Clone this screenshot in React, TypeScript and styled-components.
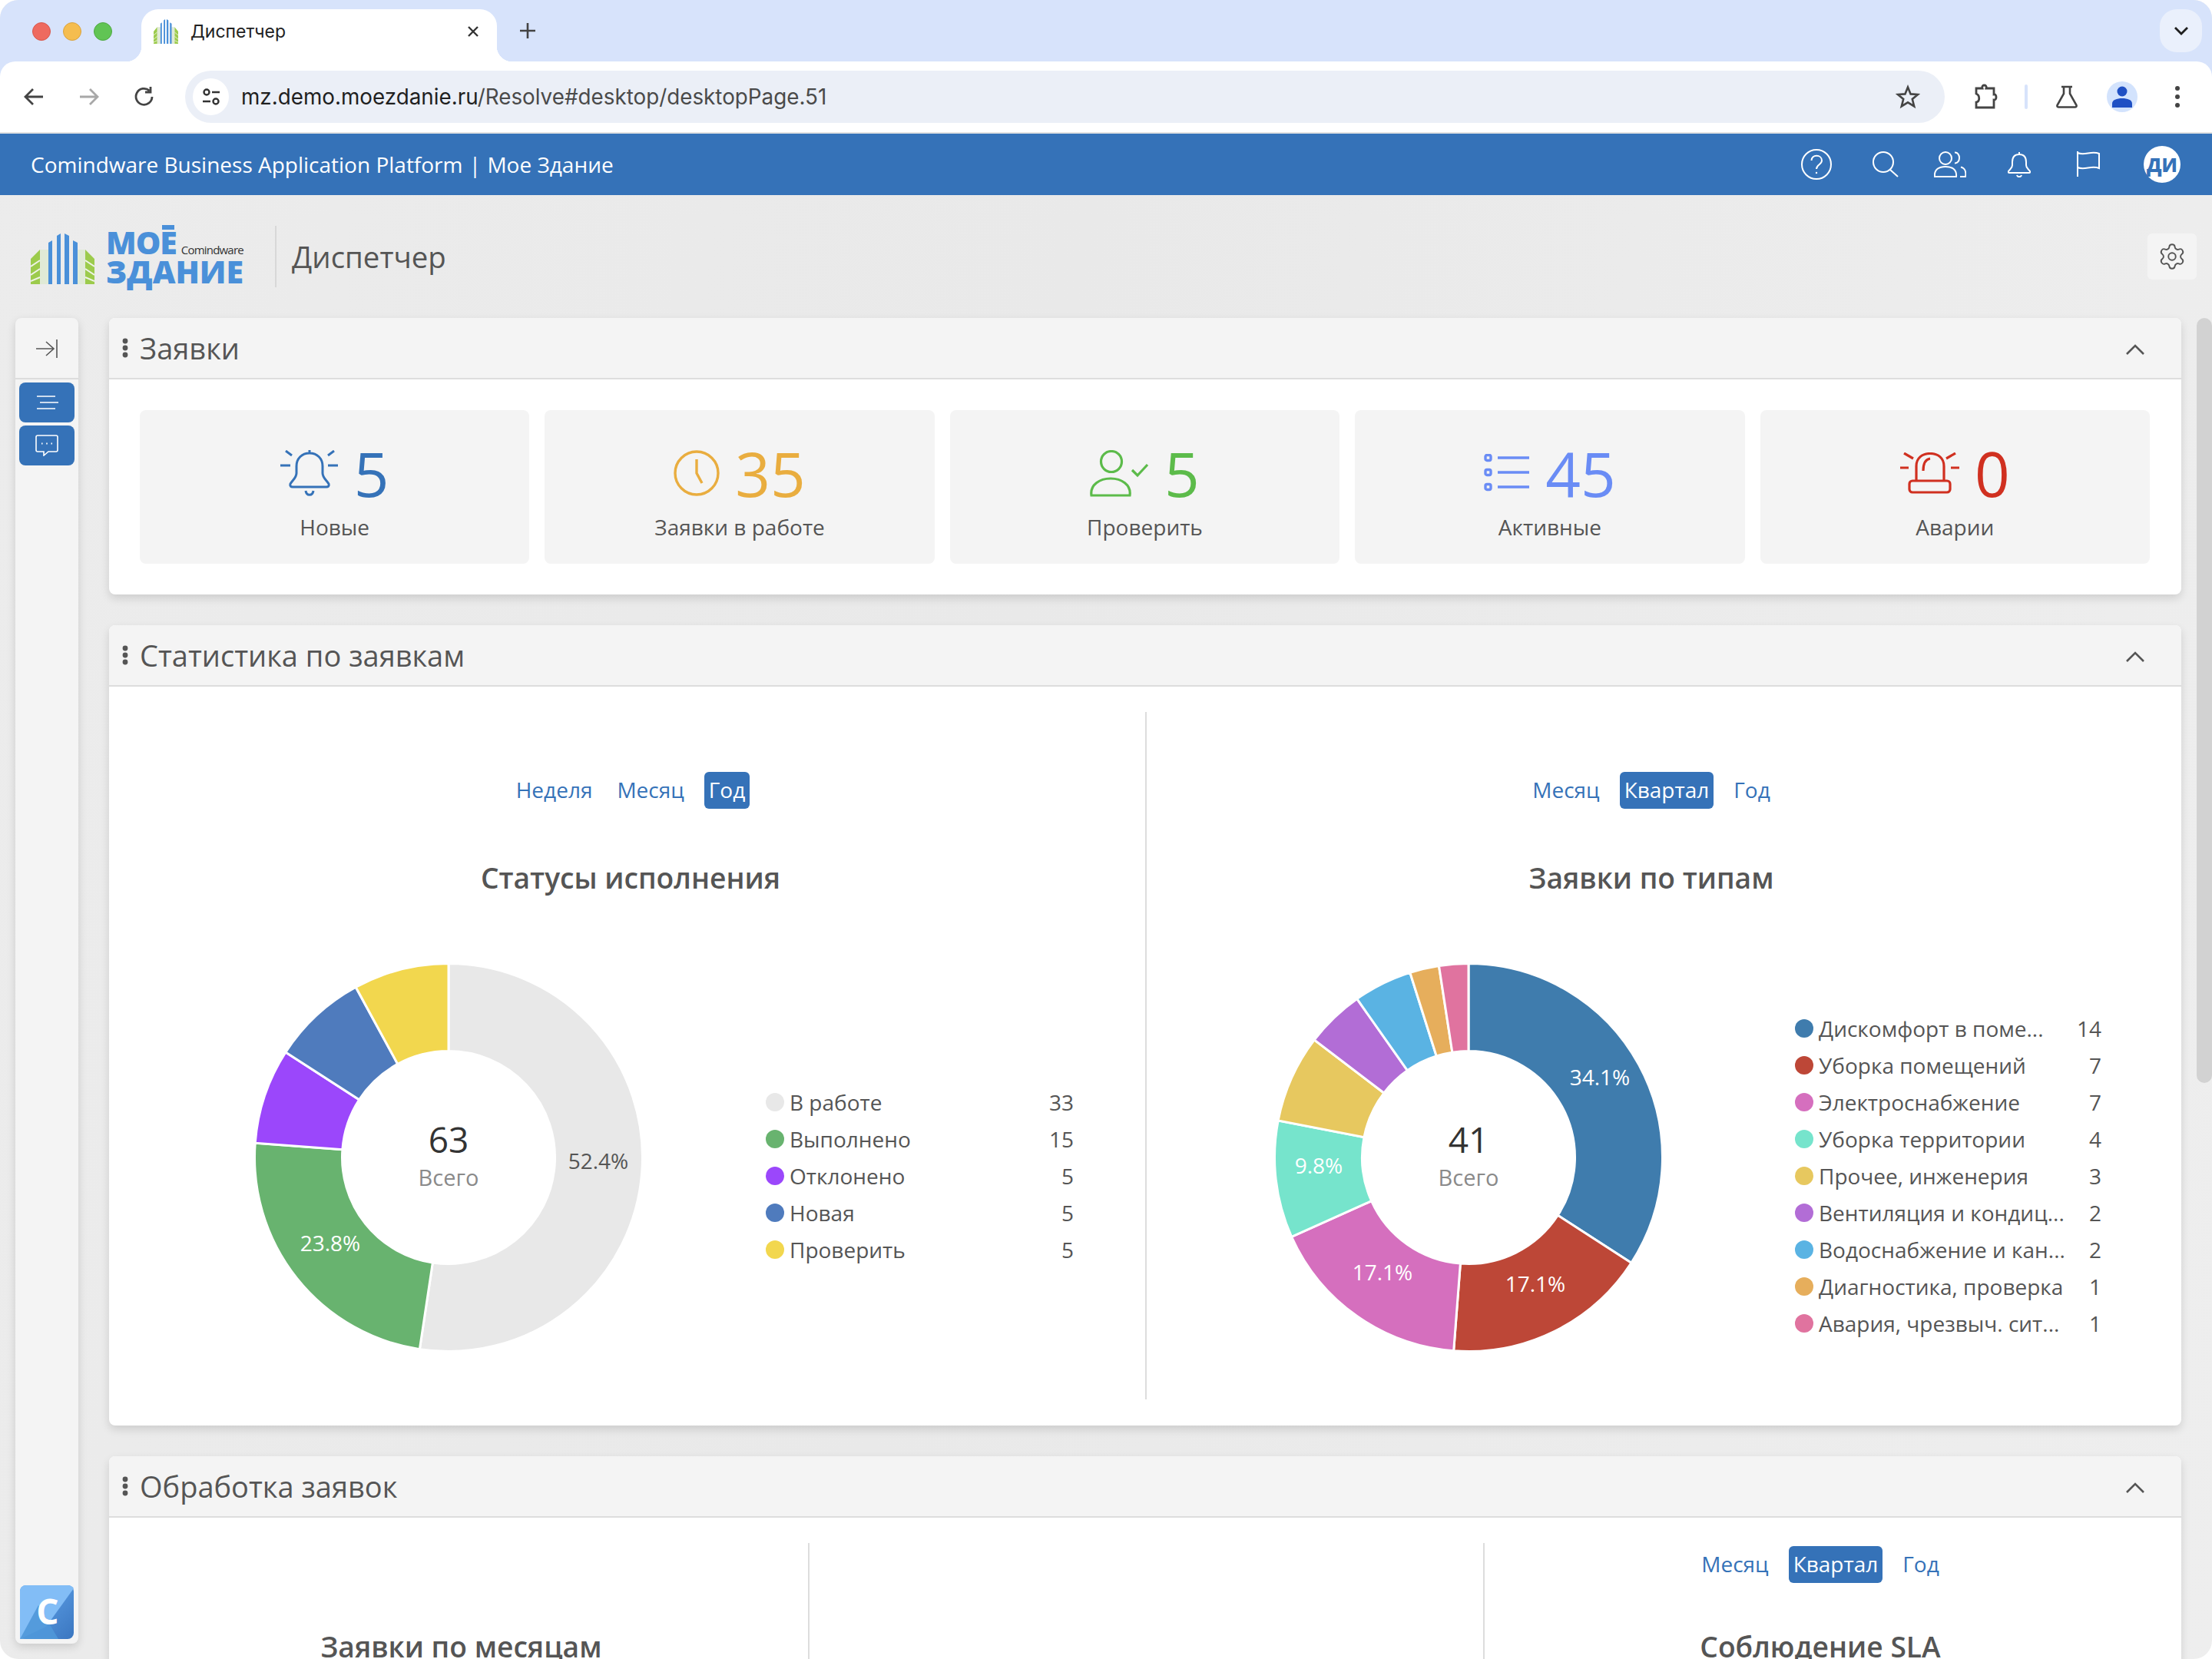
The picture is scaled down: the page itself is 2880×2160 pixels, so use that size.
import React from 'react';
import styled, { createGlobalStyle } from 'styled-components';
import { Settings } from 'lucide-react';

const GlobalStyle = createGlobalStyle`
  html, body {
    margin: 0;
    background: #fff;
  }
  * {
    box-sizing: border-box;
  }
`;

const Window = styled.div`
  width: 2880px;
  height: 2160px;
  border-radius: 24px;
  overflow: hidden;
  display: flex;
  flex-direction: column;
  font-family: 'Open Sans', 'Liberation Sans', sans-serif;
  color: #555;
  background: linear-gradient(100deg, #ececec 0%, #e9e9e9 45%, #eeeeee 100%);
`;

/* browser chrome */
const Chrome = styled.div`
  background: #d7e3fb;
  flex: none;
`;

const TabStrip = styled.div`
  height: 80px;
  padding-top: 12px;
  display: flex;
  align-items: flex-start;
`;

const Lights = styled.div`
  display: flex;
  gap: 16px;
  margin: 17px 38px 0 42px;
`;

const Light = styled.span<{ $c: string; $b: string }>`
  width: 24px;
  height: 24px;
  border-radius: 50%;
  background: ${(p) => p.$c};
  border: 1px solid ${(p) => p.$b};
`;

const BrowserTab = styled.div`
  position: relative;
  width: 463px;
  height: 68px;
  background: #fff;
  border-radius: 22px 22px 0 0;
  display: flex;
  align-items: center;
  padding: 0 24px 10px 16px;
  font-family: Inter, 'Liberation Sans', sans-serif;
  font-size: 23px;
  color: #222;

  &::before,
  &::after {
    content: '';
    position: absolute;
    bottom: 0;
    width: 20px;
    height: 20px;
  }
  &::before {
    left: -20px;
    background: radial-gradient(circle at 0 0, #d7e3fb 20px, #fff 20.5px);
  }
  &::after {
    right: -20px;
    background: radial-gradient(circle at 100% 0, #d7e3fb 20px, #fff 20.5px);
  }
`;

const TabTitle = styled.span`
  margin-left: 16px;
  flex: 1;
`;

const NewTab = styled.svg`
  margin: 12px 0 0 24px;
`;

const TabListButton = styled.div`
  margin-left: auto;
  margin-right: 13px;
  width: 55px;
  height: 56px;
  border-radius: 22px;
  background: #eaf0fc;
  display: flex;
  align-items: center;
  justify-content: center;
`;

const Toolbar = styled.div`
  height: 94px;
  background: #fff;
  border-radius: 20px 20px 0 0;
  border-bottom: 2px solid #e2e2e2;
  padding: 0 0 0 28px;
  display: flex;
  align-items: center;
`;

const ToolIcon = styled.svg<{ $ml?: number }>`
  flex: none;
  margin-left: ${(p) => p.$ml ?? 0}px;
`;

const AddressBar = styled.div`
  width: 2291px;
  height: 68px;
  margin-left: 37px;
  border-radius: 34px;
  background: #ebeff7;
  display: flex;
  align-items: center;
  padding: 0 32px 0 10px;
`;

const SiteInfo = styled.div`
  width: 47px;
  height: 48px;
  border-radius: 50%;
  background: #fff;
  display: flex;
  align-items: center;
  justify-content: center;
`;

const Url = styled.div`
  flex: 1;
  margin-left: 16px;
  font-family: Inter, 'Liberation Sans', sans-serif;
  font-size: 27.8px;
  color: #1f1f1f;
  span {
    color: #4a4a4a;
  }
`;

const Separator = styled.span`
  width: 4px;
  height: 32px;
  margin-left: 35px;
  border-radius: 2px;
  background: #d7e3fb;
`;

const Profile = styled.div`
  width: 40px;
  height: 40px;
  margin-left: 36px;
  border-radius: 50%;
  background: #d3e3fd;
  display: flex;
  align-items: center;
  justify-content: center;
`;

/* app header */
const AppHeader = styled.header`
  flex: none;
  height: 80px;
  background: #3572b8;
  color: #fff;
  display: flex;
  align-items: center;
  padding: 0 41px 0 40px;
  font-size: 28px;
`;

const AppName = styled.div`
  margin-right: auto;
`;

const Pipe = styled.span`
  margin: 0 1px;
`;

const HeaderIcon = styled.svg<{ $ml: number }>`
  flex: none;
  margin-left: ${(p) => p.$ml}px;
`;

const Avatar = styled.div`
  width: 48px;
  height: 48px;
  margin-left: 57px;
  border-radius: 50%;
  background: #fff;
  color: #3572b8;
  font-size: 24px;
  font-weight: 800;
  display: flex;
  align-items: center;
  justify-content: center;
`;

/* logo row */
const TitleRow = styled.div`
  flex: none;
  height: 160px;
  display: flex;
  align-items: center;
  padding: 0 20px 0 40px;
`;

const Logo = styled.div`
  width: 278px;
  height: 70px;
  display: flex;
  gap: 15px;
  margin-top: 10px;
`;

const LogoText = styled.div`
  display: flex;
  flex-direction: column;
  color: #4a90d9;
  font-weight: 800;
  font-size: 41px;
  line-height: 38px;
  margin-top: -8px;
`;

const LogoTop = styled.div`
  display: flex;
  align-items: baseline;
  letter-spacing: -1px;
`;

const LogoE = styled.span`
  position: relative;
  &::before {
    content: '';
    position: absolute;
    left: 3px;
    right: 3px;
    top: 6px;
    height: 6px;
    background: #4a90d9;
  }
`;

const LogoBrand = styled.span`
  margin-left: 6px;
  font-size: 15px;
  line-height: 1;
  font-weight: 400;
  letter-spacing: -0.8px;
  color: #333;
`;

const LogoBottom = styled.div`
  letter-spacing: 0;
`;

const TitleDivider = styled.span`
  width: 2px;
  height: 80px;
  margin-left: 40px;
  background: #d8d8d8;
`;

const PageTitle = styled.h1`
  margin: 0 auto 0 20px;
  font-size: 38.4px;
  font-weight: 400;
  color: #555;
`;

const GearButton = styled.div`
  width: 64px;
  height: 60px;
  border-radius: 6px;
  background: #f4f4f4;
  color: #555;
  display: flex;
  align-items: center;
  justify-content: center;
`;

/* workspace */
const Workspace = styled.div`
  flex: 1;
  min-height: 0;
  display: flex;
  padding-left: 20px;
`;

const Sidebar = styled.aside`
  flex: none;
  width: 82px;
  height: 1726px;
  border-radius: 8px;
  background: #f4f4f4;
  box-shadow: 0 4px 12px rgba(0, 0, 0, 0.14);
  display: flex;
  flex-direction: column;
  align-items: center;
`;

const SideToggle = styled.div`
  width: 100%;
  height: 80px;
  border-bottom: 2px solid #ddd;
  display: flex;
  align-items: center;
  justify-content: center;
  padding: 2px 0 0 0;
`;

const SideButton = styled.div`
  width: 72px;
  height: 52px;
  margin-top: 4px;
  border-radius: 8px;
  background: #3572b8;
  display: flex;
  align-items: center;
  justify-content: center;
`;

const CompanyBadge = styled.svg`
  margin-top: auto;
  margin-bottom: 6px;
`;

const Main = styled.main`
  flex: none;
  width: 2698px;
  margin-left: 40px;
  display: flex;
  flex-direction: column;
  gap: 40px;
`;

const ScrollThumb = styled.div`
  flex: none;
  width: 20px;
  height: 996px;
  margin-left: 20px;
  border-radius: 10px;
  background: #d2d2d2;
`;

const Panel = styled.section`
  flex: none;
  border-radius: 8px;
  background: #fff;
  box-shadow: 0 5px 12px rgba(0, 0, 0, 0.13);
`;

const PanelHeader = styled.div`
  height: 80px;
  border-radius: 8px 8px 0 0;
  border-bottom: 2px solid #ddd;
  background: #f4f4f4;
  display: flex;
  align-items: center;
  padding: 0 48px 0 17px;
`;

const PanelTitle = styled.h2`
  margin: 0 auto 0 15px;
  font-size: 38px;
  font-weight: 400;
  color: #555;
`;

const Cards = styled.div`
  display: grid;
  grid-template-columns: repeat(5, 1fr);
  gap: 20px;
  padding: 40px 41px 40px 40px;
`;

const Card = styled.div`
  height: 200px;
  border-radius: 8px;
  background: #f4f4f4;
  display: flex;
  flex-direction: column;
  align-items: center;
  padding-top: 45px;
`;

const CardTop = styled.div`
  display: flex;
  align-items: center;
  gap: 20px;
  height: 74px;
`;

const CardNumber = styled.span<{ $c: string }>`
  font-size: 80px;
  line-height: 74px;
  color: ${(p) => p.$c};
`;

const CardLabel = styled.div`
  margin-top: 13px;
  font-size: 28px;
  line-height: 40px;
`;

const ChartColumns = styled.div<{ $cols: string; $h: number }>`
  display: grid;
  grid-template-columns: ${(p) => p.$cols};
  height: ${(p) => p.$h}px;
  margin-top: 33px;
`;

const Column = styled.div<{ $divider?: boolean; $pl?: number; $pr?: number }>`
  display: flex;
  flex-direction: column;
  align-items: center;
  padding-left: ${(p) => p.$pl ?? 0}px;
  padding-right: ${(p) => p.$pr ?? 0}px;
  border-left: ${(p) => (p.$divider ? '2px solid #ddd' : 'none')};
`;

const Periods = styled.div<{ $mt: number }>`
  display: flex;
  gap: 20px;
  margin-top: ${(p) => p.$mt}px;
`;

const Period = styled.div<{ $active?: boolean }>`
  height: 48px;
  padding: 0 6px;
  border-radius: 6px;
  font-size: 28px;
  line-height: 47px;
  color: ${(p) => (p.$active ? '#fff' : '#3572b8')};
  background: ${(p) => (p.$active ? '#3572b8' : 'transparent')};
`;

const ChartTitle = styled.h3<{ $mt: number }>`
  margin: ${(p) => p.$mt}px 0 0;
  height: 52px;
  font-size: 37.2px;
  line-height: 52px;
  font-weight: 600;
  color: #555;
`;

const ChartRow = styled.div`
  width: 100%;
  margin-top: 84px;
  display: flex;
`;

const Legend = styled.ul<{ $w: number; $ml: number }>`
  list-style: none;
  margin: 47px 0 0 ${(p) => p.$ml}px;
  padding: 0;
  width: ${(p) => p.$w}px;
  align-self: center;
`;

const LegendRow = styled.li`
  height: 48px;
  display: flex;
  align-items: center;
  font-size: 28px;
  white-space: nowrap;
`;

const Dot = styled.span<{ $c: string }>`
  flex: none;
  width: 24px;
  height: 24px;
  margin-right: 7px;
  border-radius: 50%;
  background: ${(p) => p.$c};
`;

const LegendValue = styled.span`
  margin-left: auto;
`;

const Pct = styled.text<{ $c: string }>`
  font-size: 28px;
  fill: ${(p) => p.$c};
  text-anchor: middle;
  dominant-baseline: central;
`;

const Total = styled.text`
  font-size: 46px;
  fill: #333;
  text-anchor: middle;
  dominant-baseline: central;
`;

const TotalLabel = styled.text`
  font-size: 29px;
  fill: #8a8a8a;
  text-anchor: middle;
  dominant-baseline: central;
`;

const Spacer = styled.span<{ $w: number }>`
  flex: none;
  width: ${(p) => p.$w}px;
`;

const PanelFoot = styled.div`
  height: 34px;
`;

const ChevronIcon = styled.svg`
  flex: none;
  margin-top: 3px;
`;

type Slice = { name: string; value: number; color: string; label?: [number, number, string, string] };

const statusData: Slice[] = [
  { name: 'В работе', value: 33, color: '#e8e8e8', label: [195, 4, '52.4%', '#555'] },
  { name: 'Выполнено', value: 15, color: '#68b36f', label: [-154, 111, '23.8%', '#fff'] },
  { name: 'Отклонено', value: 5, color: '#9b47fb' },
  { name: 'Новая', value: 5, color: '#4f7bbd' },
  { name: 'Проверить', value: 5, color: '#f2d74e' },
];

const typeData: Slice[] = [
  { name: 'Дискомфорт в поме...', value: 14, color: '#3f7cad', label: [171, -105, '34.1%', '#fff'] },
  { name: 'Уборка помещений', value: 7, color: '#bd4737', label: [87, 164, '17.1%', '#fff'] },
  { name: 'Электроснабжение', value: 7, color: '#d56fbe', label: [-112, 149, '17.1%', '#fff'] },
  { name: 'Уборка территории', value: 4, color: '#76e4cc', label: [-195, 10, '9.8%', '#fff'] },
  { name: 'Прочее, инженерия', value: 3, color: '#e7c85f' },
  { name: 'Вентиляция и кондиц...', value: 2, color: '#b26dd6' },
  { name: 'Водоснабжение и кан...', value: 2, color: '#5ab3e3' },
  { name: 'Диагностика, проверка', value: 1, color: '#e6ae5c' },
  { name: 'Авария, чрезвыч. сит...', value: 1, color: '#e0739f' },
];

const R = 252.5;
const r = 138.5;
const C = 254;

const polar = (rad: number, a: number) =>
  `${(C + rad * Math.sin(a)).toFixed(2)} ${(C - rad * Math.cos(a)).toFixed(2)}`;

const Donut: React.FC<{ data: Slice[] }> = ({ data }) => {
  const total = data.reduce((s, d) => s + d.value, 0);
  let angle = 0;
  return (
    <svg width={508} height={508} viewBox="0 0 508 508" style={{ flex: 'none' }}>
      {data.map((d) => {
        const a0 = angle;
        angle += (d.value / total) * Math.PI * 2;
        const large = angle - a0 > Math.PI ? 1 : 0;
        return (
          <path
            key={d.name}
            d={`M${polar(R, a0)} A${R} ${R} 0 ${large} 1 ${polar(R, angle)} L${polar(r, angle)} A${r} ${r} 0 ${large} 0 ${polar(r, a0)}Z`}
            fill={d.color}
            stroke="#fff"
            strokeWidth={3}
          />
        );
      })}
      {data.map((d) =>
        d.label ? (
          <Pct key={d.name} x={C + d.label[0]} y={C + d.label[1]} $c={d.label[3]}>
            {d.label[2]}
          </Pct>
        ) : null
      )}
      <Total x={C} y={C - 24}>{total}</Total>
      <TotalLabel x={C} y={C + 25}>Всего</TotalLabel>
    </svg>
  );
};

const BuildingMark: React.FC<{ w: number; h: number }> = ({ w, h }) => (
  <svg width={w} height={h} viewBox="0 0 83 66" preserveAspectRatio="none" style={{ flex: 'none' }}>
    <path d="M12 21 L23 21 L23 66 L12 66Z M60 21 L71 21 L71 66 L60 66Z" fill="#e0ead6" />
    <path d="M0 33 L12 21 L12 66 L0 66Z M83 33 L71 21 L71 66 L83 66Z" fill="#9ccb4c" />
    <path d="M0 43 L12 35 M0 54 L12 46 M0 62 L12 57 M83 43 L71 35 M83 54 L71 46 M83 62 L71 57" stroke="#eef3e6" strokeWidth={2} />
    <path d="M23 12 L28 9 L28 66 L23 66Z M34 3 L39 0 L39 66 L34 66Z M44 0 L50 3 L50 66 L44 66Z M55 9 L61 12 L61 66 L55 66Z" fill="#4a90d9" />
  </svg>
);

const GripDots: React.FC = () => (
  <svg width="8" height="26" viewBox="0 0 8 26" fill="#555" style={{ flex: 'none' }}>
    <circle cx="4" cy="4" r="3.4" />
    <circle cx="4" cy="13" r="3.4" />
    <circle cx="4" cy="22" r="3.4" />
  </svg>
);

const Chevron: React.FC = () => (
  <ChevronIcon width="24" height="14" viewBox="0 0 24 14" fill="none" stroke="#555" strokeWidth="2.6">
    <path d="M1 13 L12 2 L23 13" />
  </ChevronIcon>
);

const App: React.FC = () => {
  return (
    <Window>
      <GlobalStyle />
      <Chrome>
        <TabStrip>
          <Lights>
            <Light $c="#ee6a5f" $b="#d8574c" />
            <Light $c="#f5bd4f" $b="#d9a33e" />
            <Light $c="#61c454" $b="#4fa942" />
          </Lights>
          <BrowserTab>
            <BuildingMark w={32} h={32} />
            <TabTitle>Диспетчер</TabTitle>
            <svg width="14" height="14" viewBox="0 0 14 14" fill="none" stroke="#333" strokeWidth="2.4">
              <path d="M1 1 L13 13 M13 1 L1 13" />
            </svg>
          </BrowserTab>
          <NewTab width="32" height="32" viewBox="0 0 32 32" fill="none" stroke="#444" strokeWidth="2.6">
            <path d="M16 6 V26 M6 16 H26" />
          </NewTab>
          <TabListButton>
            <svg width="20" height="12" viewBox="0 0 20 12" fill="none" stroke="#1f1f1f" strokeWidth="2.8">
              <path d="M2 2 L10 10 L18 2" />
            </svg>
          </TabListButton>
        </TabStrip>
        <Toolbar>
          <ToolIcon width="32" height="32" viewBox="0 0 32 32" fill="none" stroke="#444" strokeWidth="2.8">
            <path d="M28 16 H5 M15 6 L5 16 L15 26" />
          </ToolIcon>
          <ToolIcon $ml={40} width="32" height="32" viewBox="0 0 32 32" fill="none" stroke="#a8a8a8" strokeWidth="2.8">
            <path d="M4 16 H27 M17 6 L27 16 L17 26" />
          </ToolIcon>
          <ToolIcon $ml={40} width="32" height="32" viewBox="0 0 32 32" fill="none" stroke="#444" strokeWidth="2.8">
            <path d="M26 16 A10.5 10.5 0 1 1 22.5 8 M24 3 V10 H17" />
          </ToolIcon>
          <AddressBar>
            <SiteInfo>
              <svg width="28" height="28" viewBox="0 0 28 28" fill="none" stroke="#333" strokeWidth="2.4">
                <circle cx="8" cy="8" r="3.5" />
                <path d="M15 8 H25 M3 20 H13" />
                <circle cx="20" cy="20" r="3.5" />
              </svg>
            </SiteInfo>
            <Url>
              mz.demo.moezdanie.ru<span>/Resolve#desktop/desktopPage.51</span>
            </Url>
            <svg width="32" height="32" viewBox="0 0 32 32" fill="none" stroke="#444" strokeWidth="2.6" strokeLinejoin="miter">
              <path d="M16 3.5 L19.6 12.4 L29 13 L21.8 19 L24.2 28.4 L16 23.3 L7.8 28.4 L10.2 19 L3 13 L12.4 12.4Z" />
            </svg>
          </AddressBar>
          <ToolIcon $ml={37} width="32" height="34" viewBox="0 0 32 34" fill="none" stroke="#444" strokeWidth="2.8">
            <path d="M4 6 H12 C11 3 13 2 14.5 2 C16 2 18 3 17 6 H27 V14 C31 13 31 22 27 21 V31 H4 V24 C9 23 9 15 4 13Z" />
          </ToolIcon>
          <Separator />
          <ToolIcon $ml={35} width="32" height="32" viewBox="0 0 32 32" fill="none" stroke="#444" strokeWidth="2.6">
            <path d="M9 3 H23 M12 3 V12 L3.5 27 C3 28.5 4 29.5 5.5 29.5 H26.5 C28 29.5 29 28.5 28.5 27 L20 12 V3" />
          </ToolIcon>
          <Profile>
            <svg width="26" height="28" viewBox="0 0 26 28" fill="#1f50c4">
              <circle cx="13" cy="7" r="6.5" />
              <path d="M0 28 V23 C0 18 6 16 13 16 C20 16 26 18 26 23 V28Z" />
            </svg>
          </Profile>
          <ToolIcon $ml={36} width="32" height="32" viewBox="0 0 32 32" fill="#444">
            <circle cx="16" cy="5" r="3" />
            <circle cx="16" cy="16" r="3" />
            <circle cx="16" cy="27" r="3" />
          </ToolIcon>
        </Toolbar>
      </Chrome>

      <AppHeader>
        <AppName>
          Comindware Business Application Platform <Pipe>|</Pipe> Мое Здание
        </AppName>
        <HeaderIcon $ml={0} width="40" height="40" viewBox="0 0 40 40" fill="none" stroke="#fff" strokeWidth="2">
          <circle cx="20" cy="20" r="19" />
          <path d="M13.5 15 C13.5 6.5 27 7 27 15 C27 20.5 20 20 20 26" />
          <circle cx="20" cy="31" r="1.2" fill="#fff" stroke="none" />
        </HeaderIcon>
        <HeaderIcon $ml={53} width="34" height="34" viewBox="0 0 34 34" fill="none" stroke="#fff" strokeWidth="2">
          <circle cx="14" cy="14" r="13" />
          <path d="M23 24 L33 33" />
        </HeaderIcon>
        <HeaderIcon $ml={46} width="42" height="34" viewBox="0 0 42 34" fill="none" stroke="#fff" strokeWidth="2">
          <circle cx="15" cy="9" r="8" />
          <path d="M1 33 C0 23 7 20 15 20 C23 20 30 23 29 33Z" />
          <path d="M27 1.5 C35 1 35 16 27 15.5 M35 20.5 C41 22 42 28 41 33 H34" />
        </HeaderIcon>
        <HeaderIcon $ml={54} width="30" height="34" viewBox="0 0 30 34" fill="none" stroke="#fff" strokeWidth="2">
          <path d="M15 4 C9 4 6 8 6 14 V18 C6 22 3 23 1 26 C0.5 27.5 1 28 2 28 H28 C29 28 29.5 27.5 29 26 C27 23 24 22 24 18 V14 C24 8 21 4 15 4Z M15 1 V4" />
          <path d="M12 31 C13 34 17 34 18 31" />
        </HeaderIcon>
        <HeaderIcon $ml={60} width="30" height="34" viewBox="0 0 30 34" fill="none" stroke="#fff" strokeWidth="2">
          <path d="M1 0 V33 M1 2 C10 6 19 -1 29 3 V22 C19 18 10 25 1 21" />
        </HeaderIcon>
        <Avatar>ДИ</Avatar>
      </AppHeader>

      <TitleRow>
        <Logo>
          <BuildingMark w={83} h={66} />
          <LogoText>
            <LogoTop>
              <span>МО<LogoE>Е</LogoE></span>
              <LogoBrand>Comindware</LogoBrand>
            </LogoTop>
            <LogoBottom>ЗДАНИЕ</LogoBottom>
          </LogoText>
        </Logo>
        <TitleDivider />
        <PageTitle>Диспетчер</PageTitle>
        <GearButton>
          <Settings size={38} strokeWidth={1.2} />
        </GearButton>
      </TitleRow>

      <Workspace>
        <Sidebar>
          <SideToggle>
            <svg width="30" height="24" viewBox="0 0 30 24" fill="none" stroke="#555" strokeWidth="1.6">
              <path d="M1 12 H24 M14 3 L24 12 L14 21 M28 0 V24" />
            </svg>
          </SideToggle>
          <SideButton>
            <svg width="30" height="20" viewBox="0 0 30 20" fill="none" stroke="#fff" strokeWidth="1.6">
              <path d="M2 2 H26 M6 10 H30 M2 18 H26" />
            </svg>
          </SideButton>
          <SideButton>
            <svg width="30" height="28" viewBox="0 0 30 28" fill="none" stroke="#fff" strokeWidth="1.6">
              <path d="M3 1 H27 C28 1 29 2 29 3 V20 C29 21 28 22 27 22 H17 L11 27 V22 H3 C2 22 1 21 1 20 V3 C1 2 2 1 3 1Z" />
              <path d="M8 11.5 H9.5 M14.2 11.5 H15.8 M20.5 11.5 H22" strokeWidth="2.2" />
            </svg>
          </SideButton>
          <CompanyBadge width="70" height="70" viewBox="0 0 70 70">
            <defs>
              <linearGradient id="badge" x1="0" y1="0" x2="1" y2="1">
                <stop offset="0" stopColor="#66aaf0" />
                <stop offset="1" stopColor="#3a76c0" />
              </linearGradient>
            </defs>
            <rect width="70" height="70" rx="8" fill="url(#badge)" />
            <path d="M0 8 C0 3 3 0 8 0 H62 C66 0 69 2 70 4 L34 54 L0 70Z" fill="#82bdf6" />
            <path d="M0 70 L24 26 L50 70Z" fill="#4f97d9" opacity="0.9" />
            <text x="36" y="51" textAnchor="middle" fontSize="46" fontWeight="700" fill="#fff">C</text>
          </CompanyBadge>
        </Sidebar>

        <Main>
          <Panel>
            <PanelHeader>
              <GripDots />
              <PanelTitle>Заявки</PanelTitle>
              <Chevron />
            </PanelHeader>
            <Cards>
              <Card>
                <CardTop>
                  <svg width="76" height="60" viewBox="0 0 76 60" fill="none" stroke="#3572b8" strokeWidth="3">
                    <path d="M38 4 C28 4 21 11 21 21 V30 C21 36 16 39 13 44 C12 47 14 48 16 48 H60 C62 48 64 47 63 44 C60 39 55 36 55 30 V21 C55 11 48 4 38 4Z M38 0 V4" />
                    <path d="M33 53 C34 60 42 60 43 53 M7 1 L15 7 M70 1 L62 7 M0 20 H13 M62 20 H75" />
                  </svg>
                  <CardNumber $c="#3572b8">5</CardNumber>
                </CardTop>
                <CardLabel>Новые</CardLabel>
              </Card>
              <Card>
                <CardTop>
                  <svg width="60" height="62" viewBox="0 0 60 62" fill="none" stroke="#e9ad3f" strokeWidth="3.4">
                    <circle cx="30" cy="31" r="28" />
                    <path d="M30 13 V31 L37 44" />
                  </svg>
                  <CardNumber $c="#e9ad3f">35</CardNumber>
                </CardTop>
                <CardLabel>Заявки в работе</CardLabel>
              </Card>
              <Card>
                <CardTop>
                  <svg width="77" height="61" viewBox="0 0 77 61" fill="none" stroke="#5cbb4a" strokeWidth="3.2">
                    <circle cx="28" cy="15" r="13.5" />
                    <path d="M2 59 C0 45 13 37 27 37 C41 37 54 45 52 59Z" />
                    <path d="M55 26 L62 33 L75 19" />
                  </svg>
                  <CardNumber $c="#5cbb4a">5</CardNumber>
                </CardTop>
                <CardLabel>Проверить</CardLabel>
              </Card>
              <Card>
                <CardTop>
                  <svg width="60" height="50" viewBox="0 0 60 50" fill="none" stroke="#6a8cf5" strokeWidth="3.4">
                    <rect x="2" y="1.5" width="7" height="7" rx="2" />
                    <rect x="2" y="20.5" width="7" height="7" rx="2" />
                    <rect x="2" y="39.5" width="7" height="7" rx="2" />
                    <path d="M18 5 H59 M18 24 H59 M18 43 H59" />
                  </svg>
                  <CardNumber $c="#6a8cf5">45</CardNumber>
                </CardTop>
                <CardLabel>Активные</CardLabel>
              </Card>
              <Card>
                <CardTop>
                  <svg width="77" height="54" viewBox="0 0 77 54" fill="none" stroke="#d03020" strokeWidth="3.2">
                    <path d="M21 36 V18 C21 7 29 1.5 39 1.5 C49 1.5 57 7 57 18 V36" />
                    <path d="M30 24 C30 14 33 9 39 8" />
                    <rect x="12" y="37" width="53" height="15" rx="4" />
                    <path d="M5 1 L17 8 M72 1 L60 8 M0 20 H11 M66 20 H77" />
                  </svg>
                  <CardNumber $c="#d03020">0</CardNumber>
                </CardTop>
                <CardLabel>Аварии</CardLabel>
              </Card>
            </Cards>
          </Panel>

          <Panel>
            <PanelHeader>
              <GripDots />
              <PanelTitle>Статистика по заявкам</PanelTitle>
              <Chevron />
            </PanelHeader>
            <ChartColumns $cols="1349px 1fr" $h={895}>
              <Column $pl={9}>
                <Periods $mt={78}>
                  <Period>Неделя</Period>
                  <Period>Месяц</Period>
                  <Period $active>Год</Period>
                </Periods>
                <ChartTitle $mt={64}>Статусы исполнения</ChartTitle>
                <ChartRow>
                  <Spacer $w={179} />
                  <Donut data={statusData} />
                  <Legend $w={401} $ml={159}>
                    {statusData.map((d) => (
                      <LegendRow key={d.name}>
                        <Dot $c={d.color} />
                        {d.name}
                        <LegendValue>{d.value}</LegendValue>
                      </LegendRow>
                    ))}
                  </Legend>
                </ChartRow>
              </Column>
              <Column $divider $pr={33}>
                <Periods $mt={78}>
                  <Period>Месяц</Period>
                  <Period $active>Квартал</Period>
                  <Period>Год</Period>
                </Periods>
                <ChartTitle $mt={64}>Заявки по типам</ChartTitle>
                <ChartRow>
                  <Spacer $w={165} />
                  <Donut data={typeData} />
                  <Legend $w={399} $ml={171}>
                    {typeData.map((d) => (
                      <LegendRow key={d.name}>
                        <Dot $c={d.color} />
                        {d.name}
                        <LegendValue>{d.value}</LegendValue>
                      </LegendRow>
                    ))}
                  </Legend>
                </ChartRow>
              </Column>
            </ChartColumns>
            <PanelFoot />
          </Panel>

          <Panel>
            <PanelHeader>
              <GripDots />
              <PanelTitle>Обработка заявок</PanelTitle>
              <Chevron />
            </PanelHeader>
            <ChartColumns $cols="910px 879px 1fr" $h={260}>
              <Column $pl={7}>
                <ChartTitle $mt={109}>Заявки по месяцам</ChartTitle>
              </Column>
              <Column $divider />
              <Column $divider $pr={33}>
                <Periods $mt={4}>
                  <Period>Месяц</Period>
                  <Period $active>Квартал</Period>
                  <Period>Год</Period>
                </Periods>
                <ChartTitle $mt={57}>Соблюдение SLA</ChartTitle>
              </Column>
            </ChartColumns>
          </Panel>
        </Main>
        <ScrollThumb />
      </Workspace>
    </Window>
  );
};

export default App;
